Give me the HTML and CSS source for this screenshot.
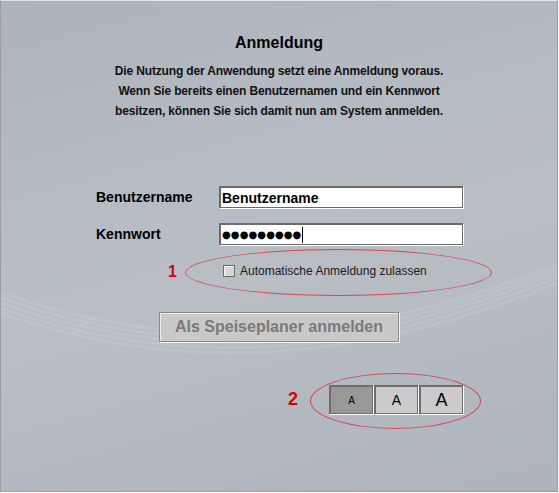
FILE: index.html
```html
<!DOCTYPE html>
<html lang="de">
<head>
    <meta charset="UTF-8">
    <meta name="viewport" content="width=device-width, initial-scale=1.0">
    <title>Anmeldung</title>
    <link rel="stylesheet" href="styles.css">
</head>
<body>

<!-- Application window -->
<div class="window">

  <!-- Light swoosh in the background -->
  <svg class="swoosh" width="557" height="491" viewBox="0 0 557 491">
    <path d="M0 292 Q 260 385 560 262" />
    <path d="M0 297 Q 260 390 560 266" />
    <path d="M0 302 Q 260 395 560 270" />
    <path d="M0 307 Q 260 400 560 275" />
    <path d="M0 312 Q 260 405 560 280" />
  </svg>

  <main class="login">
    <h1 class="login-title">Anmeldung</h1>
    <p class="login-intro">
      Die Nutzung der Anwendung setzt eine Anmeldung voraus.<br>
      Wenn Sie bereits einen Benutzernamen und ein Kennwort<br>
      besitzen, können Sie sich damit nun am System anmelden.
    </p>

    <!-- Credentials -->
    <div class="fields">
      <label class="field-label" for="user">Benutzername</label>
      <input class="field" id="user" type="text" value="Benutzername">
      <label class="field-label" for="pass">Kennwort</label>
      <div class="field password" id="pass"><span class="dots">●●●●●●●●●</span></div>
    </div>

    <div class="auto-login">
      <label class="check-label"><input class="check" type="checkbox"> Automatische Anmeldung zulassen</label>
    </div>

    <button class="submit" type="button">Als Speiseplaner anmelden</button>

    <!-- Font size switcher -->
    <div class="font-sizes">
      <button class="size small active" type="button">A</button>
      <button class="size medium" type="button">A</button>
      <button class="size large" type="button">A</button>
    </div>
  </main>

  <!-- Red annotations drawn over the screen -->
  <span class="marker marker-one">1</span>
  <span class="ring ring-one"></span>
  <span class="marker marker-two">2</span>
  <span class="ring ring-two"></span>
</div>

</body>
</html>
```

FILE: styles.css
```css
/* Basic box-sizing reset */
*, *::before, *::after {
    box-sizing: border-box;
}

body {
    margin: 0;
    background: #ffffff;
    font-family: "Liberation Sans", Arial, sans-serif;
}

/* Window frame with the grey gradient */
.window {
    position: relative;
    width: 558px;
    height: 492px;
    border: 1px solid #9a9ea4;
    border-top-color: #e4e6e8;
    background: linear-gradient(165deg, #adb3ba 0%, #b6bcc3 35%, #b9bec5 55%, #aeb4bb 100%);
    overflow: hidden;
}

.swoosh {
    position: absolute;
    top: 0;
    left: 0;
}

.swoosh path {
    fill: none;
    stroke: #ffffff;
    stroke-opacity: 0.09;
    stroke-width: 3;
}

.login {
    position: relative;
    padding-top: 32px;
}

.login-title {
    margin: 0 0 8px 0;
    font-size: 16px;
    line-height: 20px;
    text-align: center;
    color: #000;
}

.login-intro {
    margin: 0;
    font-size: 12px;
    font-weight: bold;
    line-height: 20px;
    letter-spacing: -0.15px;
    text-align: center;
    color: #111;
}

/* Label / input grid */
.fields {
    display: grid;
    grid-template-columns: 123px 244px;
    grid-auto-rows: 22px;
    row-gap: 15px;
    align-items: center;
    margin-top: 65px;
    padding-left: 95px;
}

.field-label {
    font-size: 14px;
    font-weight: bold;
    color: #000;
}

.field {
    width: 244px;
    height: 22px;
    margin: 0;
    padding: 0 0 0 1px;
    border: 2px solid #6b6b6b;
    border-right-width: 1px;
    border-bottom-width: 1px;
    box-shadow: 1px 1px 0 #ffffff;
    background: #ffffff;
    font-family: "Liberation Sans", Arial, sans-serif;
    font-size: 14px;
    font-weight: bold;
    color: #000;
    outline: none;
}

.password {
    display: flex;
    align-items: center;
}

.dots {
    font-family: "DejaVu Sans", sans-serif;
    font-size: 10px;
    letter-spacing: 0.1px;
    line-height: 16px;
    padding-right: 1px;
    border-right: 1px solid #000;
}

/* Checkbox row */
.auto-login {
    display: flex;
    align-items: center;
    height: 20px;
    margin-top: 16px;
    padding-left: 222px;
}

.check-label {
    display: flex;
    align-items: center;
    gap: 5px;
    font-size: 12px;
    color: #1a1a1a;
}

.check {
    appearance: none;
    width: 12px;
    height: 12px;
    margin: 0;
    border: 1px solid #6d6d6d;
    background: #d6d6d6;
    box-shadow: inset 1px 1px 0 #f4f4f4;
}

/* Login button */
.submit {
    display: block;
    width: 240px;
    height: 30px;
    margin: 31px 0 0 158px;
    padding: 0;
    border: 1px solid #8a8a8a;
    background: #c9c9c9;
    box-shadow: inset 1px 1px 0 #ececec, 1px 1px 0 #f2f2f2;
    font-family: "Liberation Sans", Arial, sans-serif;
    font-size: 16px;
    font-weight: bold;
    color: #7a7a7a;
}

/* Font size buttons */
.font-sizes {
    display: flex;
    gap: 1px;
    margin: 43px 0 0 328px;
}

.size {
    width: 44px;
    height: 29px;
    padding: 0;
    border: 2px solid #6e6e6e;
    border-right-width: 1px;
    border-bottom-width: 1px;
    box-shadow: 1px 1px 0 #ffffff;
    background: #cbcbcb;
    font-family: "Liberation Sans", Arial, sans-serif;
    color: #000;
}

.size.active { background: #999999; }
.size.small { font-size: 10px; }
.size.medium { font-size: 14px; }
.size.large { font-size: 18px; }

/* Annotations */
.marker {
    position: absolute;
    font-weight: bold;
    color: #e00000;
}

.marker-one {
    left: 167px;
    top: 262px;
    font-size: 16px;
}

.marker-two {
    left: 287px;
    top: 388px;
    font-size: 18px;
}

.ring {
    position: absolute;
    border: 1px solid #dd4550;
    border-radius: 50%;
}

.ring-one {
    left: 184px;
    top: 248px;
    width: 307px;
    height: 47px;
}

.ring-two {
    left: 309px;
    top: 372px;
    width: 171px;
    height: 56px;
}
```
